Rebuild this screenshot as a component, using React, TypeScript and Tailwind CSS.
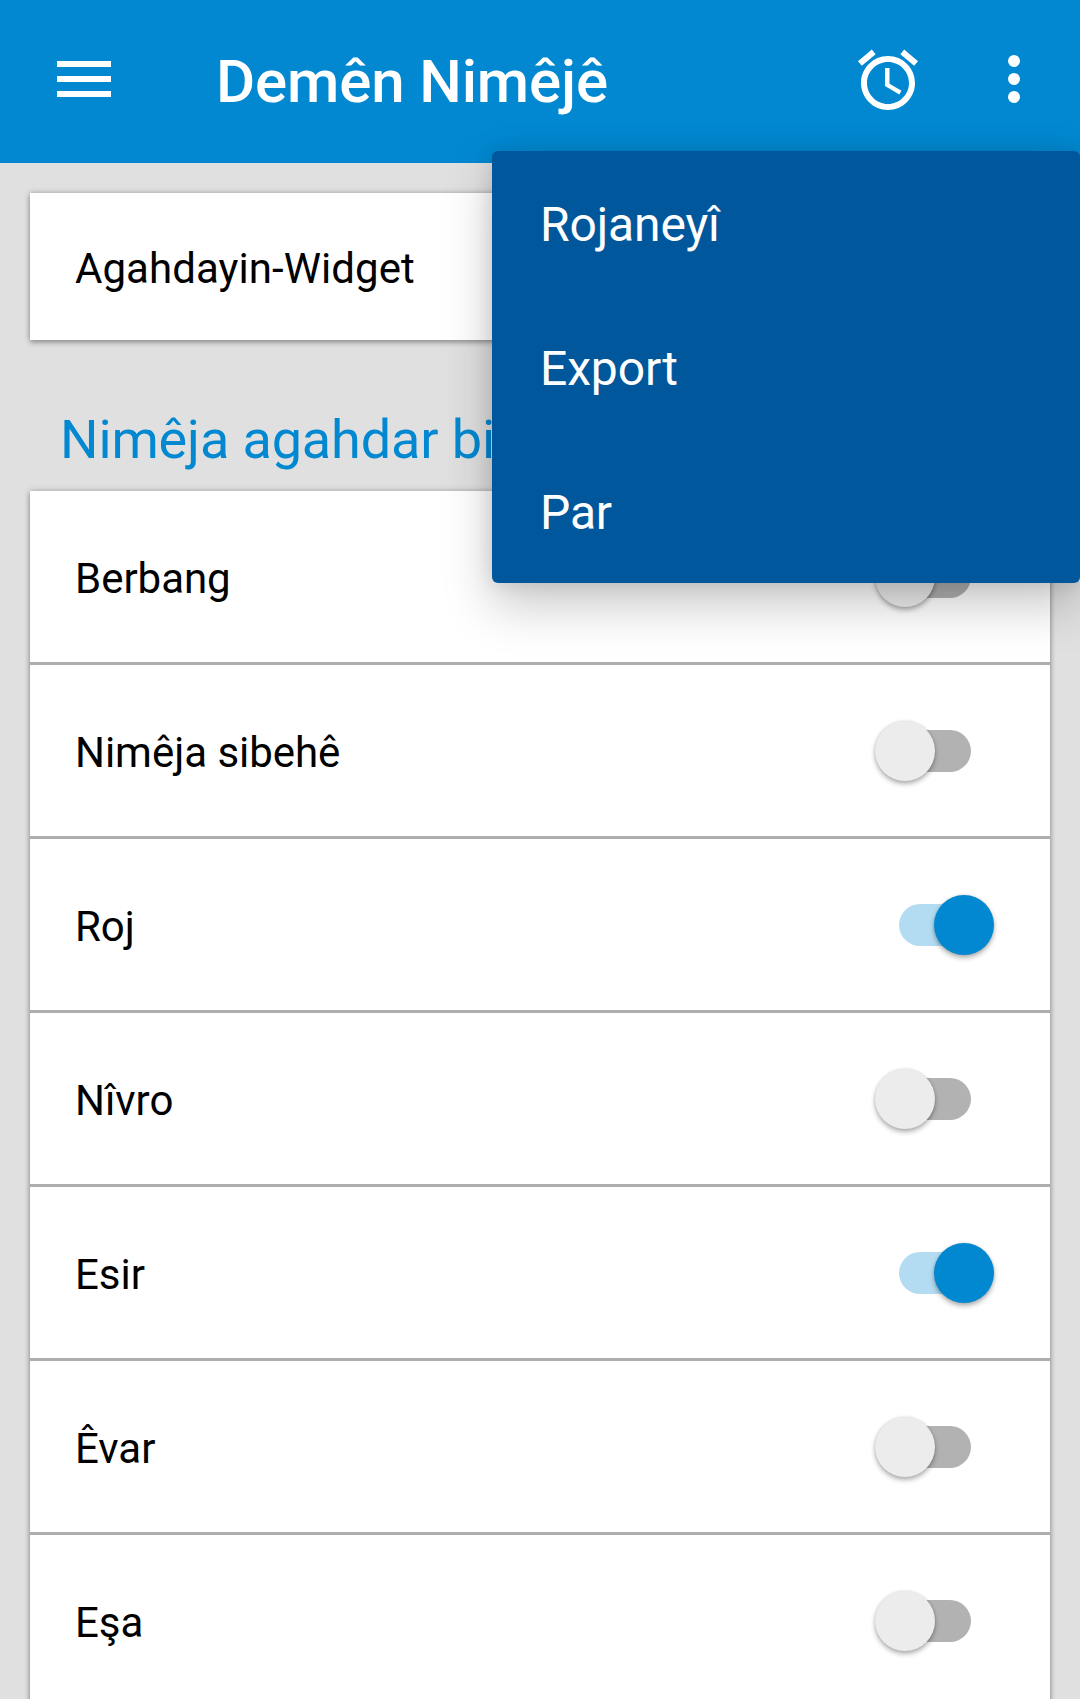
const CARD_SHADOW =
  'shadow-[0_3px_5px_rgba(0,0,0,0.24),0_0_6px_rgba(0,0,0,0.26)]';

function Toggle({ on }: { on: boolean }) {
  return (
    <span
      role="switch"
      aria-checked={on}
      className={`relative flex h-[60px] w-[119px] items-center ${on ? 'justify-end' : 'justify-start'}`}
    >
      <span
        className={`absolute top-[9px] left-6 h-[42px] w-[72px] rounded-full ${on ? 'bg-[#b3dcf3]' : 'bg-[#b2b2b2]'}`}
      />
      <span
        className={`relative size-[60px] rounded-full shadow-[0_3px_5px_rgba(0,0,0,0.3),0_0_3px_rgba(0,0,0,0.12)] ${on ? 'bg-[#0288d1]' : 'bg-[#ececec]'}`}
      />
    </span>
  );
}

const rows = [
  { label: 'Berbang', on: false },
  { label: 'Nimêja sibehê', on: false },
  { label: 'Roj', on: true },
  { label: 'Nîvro', on: false },
  { label: 'Esir', on: true },
  { label: 'Êvar', on: false },
  { label: 'Eşa', on: false },
];

const menuItems = ['Rojaneyî', 'Export', 'Par'];

export default function App() {
  return (
    <div className="relative h-[1699px] w-[1080px] overflow-hidden bg-[#e0e0e0] font-[Roboto,sans-serif] text-black">
      <header className="flex h-[163px] items-center bg-[#0288d1] pb-[5px] text-white">
        <button aria-label="Navigation" className="ml-[57px] flex w-[54px] flex-col gap-[9px]">
          <span className="h-[6px] bg-white" />
          <span className="h-[6px] bg-white" />
          <span className="h-[6px] bg-white" />
        </button>
        <h1 className="ml-[105px] flex-1 pt-[5px] text-[60px] leading-[70px] font-medium tracking-[-0.13px] whitespace-nowrap">
          Demên Nimêjê
        </h1>
        <svg viewBox="0 0 24 24" className="mt-[2px] size-[72px]" fill="currentColor">
          <path d="M22 5.72l-4.6-3.86-1.29 1.53 4.6 3.86L22 5.72zM7.88 3.39L6.6 1.86 2 5.71l1.29 1.53 4.59-3.85zM12.5 8H11v6l4.75 2.85.75-1.23-4-2.37V8zM12 4c-4.97 0-9 4.03-9 9s4.02 9 9 9c4.97 0 9-4.03 9-9s-4.03-9-9-9zm0 16c-3.87 0-7-3.13-7-7s3.13-7 7-7 7 3.13 7 7-3.13 7-7 7z" />
        </svg>
        <button aria-label="More" className="mr-[60px] ml-[84px] flex w-3 flex-col gap-[6px]">
          <span className="size-3 rounded-full bg-white" />
          <span className="size-3 rounded-full bg-white" />
          <span className="size-3 rounded-full bg-white" />
        </button>
      </header>

      <main className="px-[30px] pt-[30px]">
        <section className={`flex h-[147px] items-center bg-white pt-1 pl-[45px] text-[42px] tracking-[0.06px] ${CARD_SHADOW}`}>
          Agahdayin-Widget
        </section>

        <h2 className="flex h-[151px] items-end pb-[19px] pl-[30px] text-[54px] leading-[64px] tracking-[-0.13px] text-[#0288d1]">
          Nimêja agahdar bi
        </h2>

        <ul className={`flex flex-col gap-[3px] bg-[#adadad] ${CARD_SHADOW}`}>
          {rows.map((row) => (
            <li
              key={row.label}
              className="flex h-[171px] items-center justify-between bg-white pr-[56px] pl-[45px]"
            >
              <span className="pt-1 text-[42px] tracking-[-0.03px]">{row.label}</span>
              <Toggle on={row.on} />
            </li>
          ))}
        </ul>
      </main>

      <ul className="absolute top-[151px] right-0 w-[588px] rounded-[6px] bg-[#01579b] text-[48px] tracking-[-0.13px] text-white shadow-[0_22px_50px_rgba(0,0,0,0.22),0_0_20px_rgba(0,0,0,0.11)]">
        {menuItems.map((item) => (
          <li key={item} className="flex h-36 items-center pt-[3px] pl-12">
            {item}
          </li>
        ))}
      </ul>
    </div>
  );
}
